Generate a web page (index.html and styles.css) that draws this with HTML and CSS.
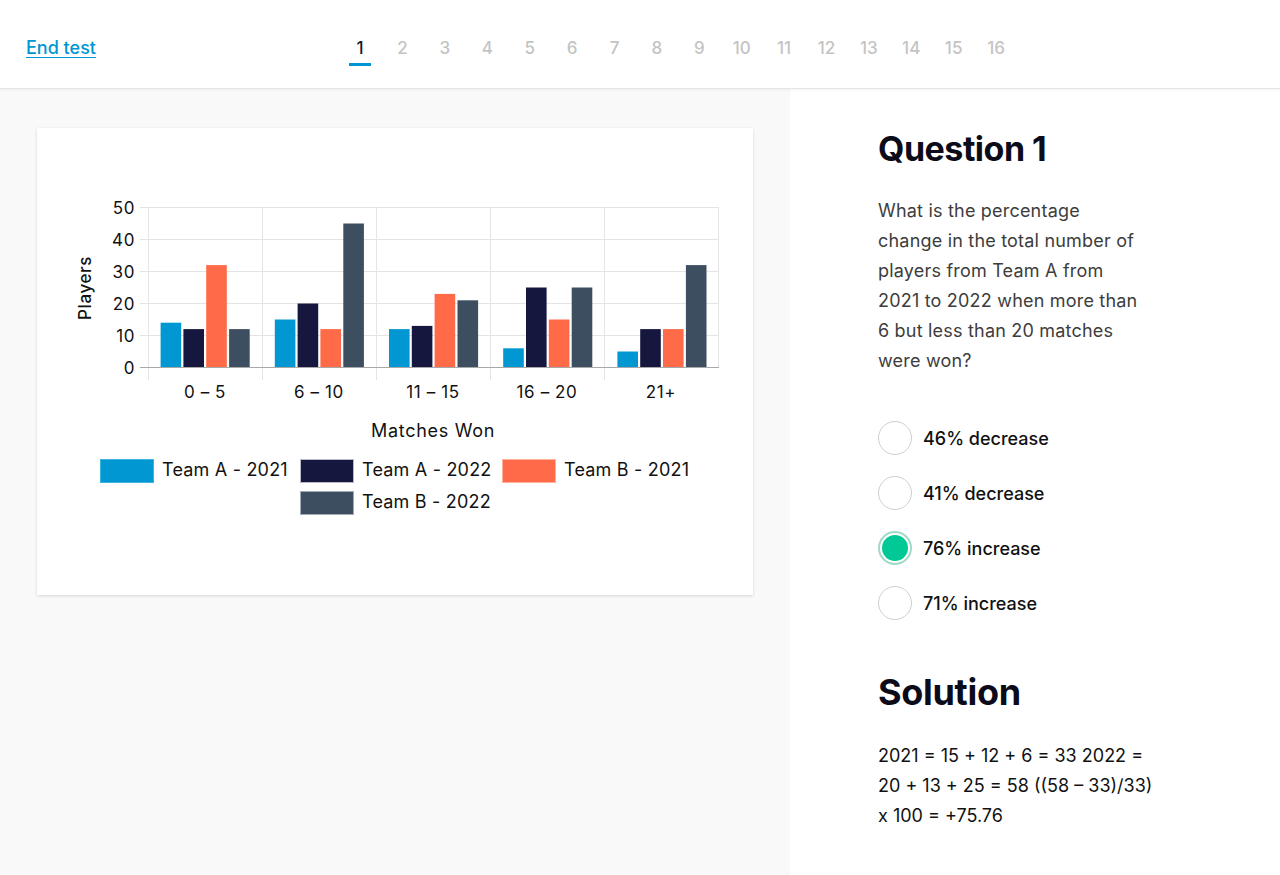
FILE: index.html
```html
<!DOCTYPE html>
<html lang="en">
<head>
<meta charset="utf-8">
<title>Question 1</title>
<link rel="stylesheet" href="styles.css">
</head>
<body>
<header class="topbar">
  <a class="end-test" href="#">End test</a>
  <nav class="steps">
    <span class="step active">1</span>
    <span class="step">2</span>
    <span class="step">3</span>
    <span class="step">4</span>
    <span class="step">5</span>
    <span class="step">6</span>
    <span class="step">7</span>
    <span class="step">8</span>
    <span class="step">9</span>
    <span class="step">10</span>
    <span class="step">11</span>
    <span class="step">12</span>
    <span class="step">13</span>
    <span class="step">14</span>
    <span class="step">15</span>
    <span class="step">16</span>
  </nav>
</header>
<main class="layout">
  <section class="left-pane">
    <div class="chart-card">
      <svg class="chart" width="716" height="467" viewBox="37 128 716 467" xmlns="http://www.w3.org/2000/svg">
        <g class="grid" stroke="#e4e4e4" stroke-width="1">
          <line x1="140" y1="207.5" x2="719" y2="207.5"/>
          <line x1="140" y1="239.5" x2="719" y2="239.5"/>
          <line x1="140" y1="271.5" x2="719" y2="271.5"/>
          <line x1="140" y1="303.5" x2="719" y2="303.5"/>
          <line x1="140" y1="335.5" x2="719" y2="335.5"/>
          <line x1="148.5" y1="207" x2="148.5" y2="380"/>
          <line x1="262.5" y1="207" x2="262.5" y2="380"/>
          <line x1="376.5" y1="207" x2="376.5" y2="380"/>
          <line x1="490.5" y1="207" x2="490.5" y2="380"/>
          <line x1="604.5" y1="207" x2="604.5" y2="380"/>
          <line x1="718.5" y1="207" x2="718.5" y2="368"/>
        </g>
        <g class="bars">
          <rect x="160.6" y="322.7" width="20.6" height="44.8" fill="#0097d3"/>
          <rect x="183.4" y="329.1" width="20.6" height="38.4" fill="#16173f"/>
          <rect x="206.2" y="265.1" width="20.6" height="102.4" fill="#ff6b48"/>
          <rect x="229.1" y="329.1" width="20.6" height="38.4" fill="#3c4e5f"/>
          <rect x="274.8" y="319.5" width="20.6" height="48" fill="#0097d3"/>
          <rect x="297.6" y="303.5" width="20.6" height="64" fill="#16173f"/>
          <rect x="320.4" y="329.1" width="20.6" height="38.4" fill="#ff6b48"/>
          <rect x="343.3" y="223.5" width="20.6" height="144" fill="#3c4e5f"/>
          <rect x="389.0" y="329.1" width="20.6" height="38.4" fill="#0097d3"/>
          <rect x="411.8" y="325.9" width="20.6" height="41.6" fill="#16173f"/>
          <rect x="434.6" y="293.9" width="20.6" height="73.6" fill="#ff6b48"/>
          <rect x="457.5" y="300.3" width="20.6" height="67.2" fill="#3c4e5f"/>
          <rect x="503.2" y="348.3" width="20.6" height="19.2" fill="#0097d3"/>
          <rect x="526.0" y="287.5" width="20.6" height="80" fill="#16173f"/>
          <rect x="548.8" y="319.5" width="20.6" height="48" fill="#ff6b48"/>
          <rect x="571.7" y="287.5" width="20.6" height="80" fill="#3c4e5f"/>
          <rect x="617.4" y="351.5" width="20.6" height="16" fill="#0097d3"/>
          <rect x="640.2" y="329.1" width="20.6" height="38.4" fill="#16173f"/>
          <rect x="663.0" y="329.1" width="20.6" height="38.4" fill="#ff6b48"/>
          <rect x="685.9" y="265.1" width="20.6" height="102.4" fill="#3c4e5f"/>
        </g>
        <line x1="140" y1="367.5" x2="719" y2="367.5" stroke="#a8a8a8" stroke-width="1"/>
        <g class="tick-y">
          <text x="135" y="209">50</text>
          <text x="135" y="241">40</text>
          <text x="135" y="273">30</text>
          <text x="135" y="305">20</text>
          <text x="135" y="337">10</text>
          <text x="135" y="369">0</text>
        </g>
        <text class="axis-title" transform="translate(86 288) rotate(-90)">Players</text>
        <g class="tick-x">
          <text x="205" y="393">0 – 5</text>
          <text x="319" y="393">6 – 10</text>
          <text x="433" y="393">11 – 15</text>
          <text x="547" y="393">16 – 20</text>
          <text x="661" y="393">21+</text>
        </g>
        <text class="x-title" x="433" y="432">Matches Won</text>
        <g class="legend">
          <rect x="100.5" y="459.5" width="53" height="23" fill="#0097d3" stroke="#3bb3e3"/>
          <text x="162" y="471.5">Team A - 2021</text>
          <rect x="300.5" y="459.5" width="53" height="23" fill="#16173f" stroke="#b9bac8"/>
          <text x="362" y="471.5">Team A - 2022</text>
          <rect x="502.5" y="459.5" width="53" height="23" fill="#ff6b48" stroke="#ffb19c"/>
          <text x="564" y="471.5">Team B - 2021</text>
          <rect x="300.5" y="491.5" width="53" height="23" fill="#3c4e5f" stroke="#a3acb6"/>
          <text x="362" y="503.5">Team B - 2022</text>
        </g>
      </svg>
    </div>
  </section>
  <section class="right-pane">
    <h1 class="q-title">Question 1</h1>
    <p class="q-text">What is the percentage change in the total number of players from Team A from 2021 to 2022 when more than 6 but less than 20 matches were won?</p>
    <ul class="options">
      <li class="option"><span class="radio"></span><span class="opt-label">46% decrease</span></li>
      <li class="option"><span class="radio"></span><span class="opt-label">41% decrease</span></li>
      <li class="option"><span class="radio checked"></span><span class="opt-label">76% increase</span></li>
      <li class="option"><span class="radio"></span><span class="opt-label">71% increase</span></li>
    </ul>
    <h2 class="s-title">Solution</h2>
    <p class="s-text">2021 = 15 + 12 + 6 = 33 2022 = 20 + 13 + 25 = 58 ((58 – 33)/33) x 100 = +75.76</p>
  </section>
</main>
</body>
</html>
```
FILE: styles.css
```css
* { box-sizing: border-box; }
html, body { margin: 0; padding: 0; }
body {
  font-family: "Inter", "Liberation Sans", sans-serif;
  color: #111;
  background: #fff;
  width: 1280px;
  height: 875px;
  overflow: hidden;
}

.topbar {
  height: 89px;
  display: flex;
  align-items: center;
  padding: 0 0 0 26px;
  border-bottom: 1px solid #e4e4e4;
  box-shadow: 0 1px 3px rgba(0,0,0,0.05);
  position: relative;
  z-index: 2;
  background: #fff;
}
.end-test {
  color: #0096d4;
  font-size: 18px;
  font-weight: 500;
  text-decoration: underline;
  text-underline-offset: 3px;
  text-decoration-thickness: 1px;
  margin-top: 6px;
}
.steps {
  display: flex;
  gap: 20px;
  margin-left: 253px;
}
.step {
  width: 22.4px;
  text-align: center;
  font-size: 17px;
  font-weight: 500;
  color: #c4c4c4;
  padding: 0 0 5px;
  border-bottom: 3px solid transparent;
  margin-top: 15px;
  line-height: 20px;
}
.step.active {
  color: #151a33;
  border-bottom-color: #0096d4;
}

.layout {
  display: flex;
  height: 786px;
}
.left-pane {
  width: 790px;
  background: #f9f9f9;
  padding: 39px 37px;
}
.chart-card {
  width: 716px;
  height: 467px;
  background: #fff;
  box-shadow: 0 1px 3px rgba(0,0,0,0.14);
}
.chart { display: block; }
.chart text {
  font-family: "Inter", "Liberation Sans", sans-serif;
  fill: #111;
  dominant-baseline: middle;
}
.tick-y text { font-size: 17px; letter-spacing: 0.6px; text-anchor: end; }
.tick-x text { font-size: 17px; letter-spacing: 0.6px; text-anchor: middle; }
.axis-title { font-size: 17px; letter-spacing: 0.6px; text-anchor: middle; font-weight: 500; }
.x-title { font-size: 18px; letter-spacing: 0.7px; text-anchor: middle; }
.legend text { font-size: 18px; letter-spacing: 0.2px; }

.right-pane {
  flex: 1;
  background: #fff;
  padding: 39px 0 0 88px;
}
.q-title {
  margin: 0;
  font-size: 34px;
  font-weight: 700;
  line-height: 42px;
  color: #0b0b1a;
  letter-spacing: -0.5px;
}
.q-text {
  margin: 26px 0 0;
  width: 268px;
  font-size: 18px;
  line-height: 30px;
  color: #3d3d3d;
  letter-spacing: 0.2px;
}
.options {
  list-style: none;
  margin: 45px 0 0;
  padding: 0;
  display: flex;
  flex-direction: column;
  gap: 21px;
}
.option {
  display: flex;
  align-items: center;
  gap: 11px;
  height: 34px;
}
.radio {
  width: 34px;
  height: 34px;
  border-radius: 50%;
  border: 1.5px solid #cfcfcf;
  flex: none;
}
.radio.checked {
  border: 2px solid #a3d9c7;
  padding: 2px;
  background: #00c995;
  background-clip: content-box;
}
.opt-label {
  font-size: 18px;
  font-weight: 500;
  color: #111;
}
.s-title {
  margin: 50px 0 0;
  font-size: 36px;
  font-weight: 700;
  line-height: 44px;
  color: #0b0b1a;
  letter-spacing: -0.3px;
}
.s-text {
  margin: 27px 0 0;
  width: 285px;
  font-size: 18px;
  line-height: 30px;
  color: #111;
}
```
